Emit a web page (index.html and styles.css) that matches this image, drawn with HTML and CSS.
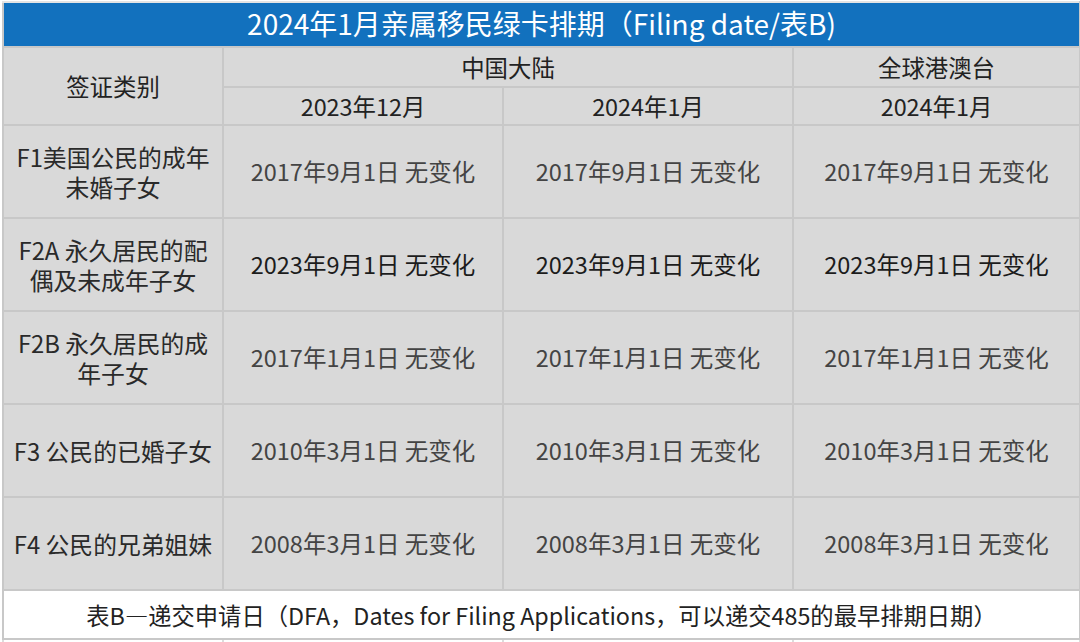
FILE: index.html
```html
<!DOCTYPE html>
<html lang="zh-CN">
<head>
<meta charset="utf-8">
<title>2024年1月亲属移民绿卡排期</title>
<link rel="stylesheet" href="styles.css">
</head>
<body>
<div class="page">
<table class="sheet">
  <colgroup>
    <col class="c1"><col class="c2"><col class="c3"><col class="c4">
  </colgroup>
  <tr class="r-title"><td colspan="4" class="title">2024年1月亲属移民绿卡排期（Filing date/表B)</td></tr>
  <tr class="r-h1">
    <td rowspan="2" class="head">签证类别</td>
    <td colspan="2" class="head">中国大陆</td>
    <td class="head">全球港澳台</td>
  </tr>
  <tr class="r-h2">
    <td class="head">2023年12月</td>
    <td class="head">2024年1月</td>
    <td class="head">2024年1月</td>
  </tr>
  <tr class="r-body">
    <td class="label"><span class="ln">F1美国公民的成年</span><span class="ln">未婚子女</span></td>
    <td class="date">2017年9月1日 无变化</td>
    <td class="date">2017年9月1日 无变化</td>
    <td class="date">2017年9月1日 无变化</td>
  </tr>
  <tr class="r-body">
    <td class="label"><span class="ln">F2A 永久居民的配</span><span class="ln">偶及未成年子女</span></td>
    <td class="date dark">2023年9月1日 无变化</td>
    <td class="date dark">2023年9月1日 无变化</td>
    <td class="date dark">2023年9月1日 无变化</td>
  </tr>
  <tr class="r-body">
    <td class="label"><span class="ln">F2B 永久居民的成</span><span class="ln">年子女</span></td>
    <td class="date">2017年1月1日 无变化</td>
    <td class="date">2017年1月1日 无变化</td>
    <td class="date">2017年1月1日 无变化</td>
  </tr>
  <tr class="r-body">
    <td class="label">F3 公民的已婚子女</td>
    <td class="date">2010年3月1日 无变化</td>
    <td class="date">2010年3月1日 无变化</td>
    <td class="date">2010年3月1日 无变化</td>
  </tr>
  <tr class="r-body">
    <td class="label">F4 公民的兄弟姐妹</td>
    <td class="date">2008年3月1日 无变化</td>
    <td class="date">2008年3月1日 无变化</td>
    <td class="date">2008年3月1日 无变化</td>
  </tr>
  <tr class="r-foot"><td colspan="4" class="foot">表B—递交申请日（DFA，Dates for Filing Applications，可以递交485的最早排期日期）</td></tr>
  <tr class="r-blank"><td class="blank"></td><td class="blank"></td><td class="blank"></td><td class="blank"></td></tr>
</table>
</div>
</body>
</html>
```

FILE: styles.css
```css
html, body {
  margin: 0;
  padding: 0;
  background: #ffffff;
  height: 642px;
  overflow: hidden;
}
.page {
  padding: 1px 0 0 2px;
  font-family: "Noto Sans CJK SC", "Noto Sans", sans-serif;
}
.sheet {
  border-collapse: collapse;
  table-layout: fixed;
  width: 1077px;
}
.c1 { width: 220px; }
.c2 { width: 280px; }
.c3 { width: 290px; }
.c4 { width: 287px; }
.sheet td {
  border: 2px solid #c8c8c8;
  padding: 0 2px;
  text-align: center;
  vertical-align: middle;
  background: #d9d9d9;
  color: #2b2b2b;
  white-space: nowrap;
}
.r-title { height: 45px; }
.r-h1 { height: 40px; }
.r-h2 { height: 38px; }
.r-body { height: 93px; }
.r-foot { height: 49px; }
.r-blank { height: 30px; }
.sheet td.title {
  background: #1271be;
  color: #ffffff;
  font-size: 28px;
  line-height: 1;
  padding-bottom: 3px;
  border-top-color: #e4e4e4;
}
.sheet td.head {
  font-size: 23.4px;
  color: #222222;
  line-height: 1.2;
}
.sheet td.label {
  font-size: 23.8px;
  line-height: 30px;
  color: #2a2a2a;
}
.ln {
  display: block;
  height: 30px;
  line-height: 30px;
}
.sheet td.date {
  font-size: 23.5px;
  color: #444444;
  line-height: 1.2;
}
.sheet td.date.dark {
  color: #1c1c1c;
}
.sheet td.foot {
  background: #ffffff;
  font-size: 23.3px;
  color: #222222;
}
.sheet td.blank {
  background: #ffffff;
  border-color: #dcdcdc;
}
```
